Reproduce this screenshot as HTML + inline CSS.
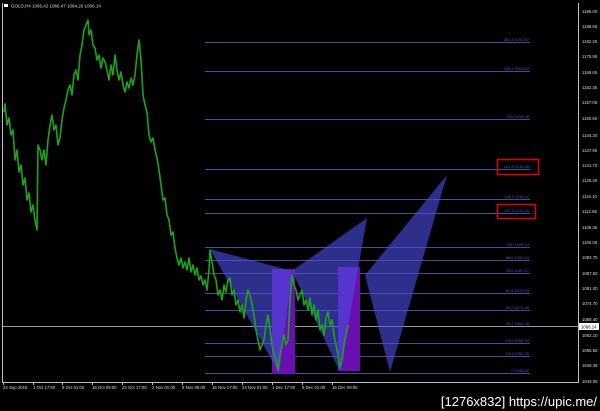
<!DOCTYPE html>
<html><head><meta charset="utf-8"><style>
html,body{margin:0;padding:0;background:#000;width:600px;height:411px;overflow:hidden}
svg{display:block}
text{font-family:"Liberation Sans",sans-serif}
</style></head><body>
<svg width="600" height="411" viewBox="0 0 600 411" xmlns="http://www.w3.org/2000/svg">
<rect width="600" height="411" fill="#000"/>
<line x1="2.5" y1="3" x2="2.5" y2="383" stroke="#c0c0c0" stroke-width="1"/>
<line x1="2" y1="382.5" x2="579" y2="382.5" stroke="#c0c0c0" stroke-width="1"/>
<line x1="578.5" y1="3" x2="578.5" y2="383" stroke="#c0c0c0" stroke-width="1"/>
<rect x="4" y="4" width="4" height="3" fill="#fff"/>
<text x="11" y="7.5" font-size="4.5" fill="#ddd">GOLD,H4  1065.42  1066.47  1064.20  1066.14</text>
<g stroke="#4c4c96" stroke-width="1">
<line x1="205" y1="42.5" x2="530" y2="42.5"/>
<line x1="205" y1="71.5" x2="530" y2="71.5"/>
<line x1="205" y1="119.5" x2="530" y2="119.5"/>
<line x1="205" y1="169.5" x2="530" y2="169.5"/>
<line x1="205" y1="199.5" x2="530" y2="199.5"/>
<line x1="205" y1="213.5" x2="530" y2="213.5"/>
<line x1="205" y1="247.5" x2="530" y2="247.5"/>
<line x1="205" y1="260.5" x2="530" y2="260.5"/>
<line x1="205" y1="273.5" x2="530" y2="273.5"/>
<line x1="205" y1="293.5" x2="530" y2="293.5"/>
<line x1="205" y1="310.5" x2="530" y2="310.5"/>
<line x1="205" y1="343.5" x2="530" y2="343.5"/>
<line x1="205" y1="356.5" x2="530" y2="356.5"/>
<line x1="205" y1="373.5" x2="530" y2="373.5"/>
</g>
<line x1="3" y1="326.5" x2="578" y2="326.5" stroke="#9a9a9a" stroke-width="1"/>
<g font-size="4" fill="#4a5ad0" text-anchor="end">
<text x="529" y="41">261.8  1192.87</text>
<text x="529" y="70">238.2  1164.63</text>
<text x="529" y="118">200  1155.06</text>
<text x="529" y="168">161.8  1135.38</text>
<text x="529" y="198">138.2  1118.10</text>
<text x="529" y="212">127.2  1112.40</text>
<text x="529" y="246">100  1098.14</text>
<text x="529" y="259">88.6  1092.44</text>
<text x="529" y="272">78.6  1087.27</text>
<text x="529" y="292">61.8  1079.03</text>
<text x="529" y="309">50.0  1071.48</text>
<text x="529" y="325">38.2  1064.38</text>
<text x="529" y="342">23.6  1058.63</text>
<text x="529" y="355">13.4  1052.76</text>
<text x="529" y="372">0  1046.62</text>
</g>
<rect x="497.5" y="159.5" width="41" height="15" fill="none" stroke="#e00000" stroke-width="1.5"/>
<rect x="497.5" y="204.5" width="38" height="14" fill="none" stroke="#e00000" stroke-width="1.5"/>
<rect x="272" y="269" width="23" height="105" fill="#6a10b0"/>
<rect x="338" y="267" width="22" height="104" fill="#6a10b0"/>
<g fill="rgba(75,75,225,0.62)">
<polygon points="210,249 292,271 279,373"/>
<polygon points="292,271 367,218 340,372"/>
<polygon points="365,275 447,175 390,372"/>
</g>
<polyline fill="none" stroke="#1aa51a" stroke-width="1.6" stroke-linejoin="round" points="
4,112 5,104 7,125 9,118 11,135 13,130 15,160 17,150 19,172 21,165 23,185 25,178 27,200 29,193 31,212 33,205 35,220 37,230 38,145 40,150 42,160 44,150 46,165 48,140 50,125 52,115 54,130 56,125 58,145 60,138 62,120 64,108 66,100 68,90 70,85 72,95 74,75 76,70 78,80 80,55 82,45 84,30 86,25 88,20 89,35 91,30 93,45 95,48 97,60 99,55 101,68 103,58 105,62 107,70 109,80 111,65 113,75 115,55 117,70 119,80 121,72 123,85 125,92 127,82 129,88 131,78 133,85 135,75 137,55 139,40 141,60 143,95 145,105 147,112 149,135 151,142 153,138 155,150 157,158 159,170 161,185 163,200 165,198 167,215 169,220 171,235 173,232 175,248 177,258 179,265 181,258 183,268 185,262 187,270 189,258 191,272 193,265 195,275 197,268 199,280 201,276 203,285 205,280 207,290 209,270 210,250 212,262 214,275 216,280 218,295 220,290 222,300 224,285 226,292 228,280 230,278 232,295 234,290 236,305 238,300 240,312 242,305 244,318 246,300 248,290 250,295 252,305 254,315 256,330 258,340 260,350 262,345 264,340 266,325 268,315 270,330 272,345 274,355 276,360 278,370 280,355 282,345 284,335 286,345 288,340 290,300 292,275 294,285 296,290 298,300 300,295 302,290 304,305 306,300 308,310 310,298 312,315 314,305 316,320 318,310 320,330 322,325 324,335 326,318 328,312 330,325 332,320 334,335 336,345 338,355 340,368 342,360 344,345 346,335 348,325"/>
<g font-size="4.3" fill="#ddd">
<text x="582" y="13">1195.00</text>
<text x="582" y="28">1188.55</text>
<text x="582" y="43">1182.25</text>
<text x="582" y="58">1175.95</text>
<text x="582" y="74">1169.65</text>
<text x="582" y="89">1162.35</text>
<text x="582" y="104">1157.05</text>
<text x="582" y="120">1150.60</text>
<text x="582" y="137">1144.30</text>
<text x="582" y="152">1137.95</text>
<text x="582" y="167">1131.70</text>
<text x="582" y="182">1125.40</text>
<text x="582" y="198">1119.10</text>
<text x="582" y="213">1112.65</text>
<text x="582" y="229">1106.35</text>
<text x="582" y="244">1100.05</text>
<text x="582" y="259">1093.75</text>
<text x="582" y="275">1087.50</text>
<text x="582" y="290">1081.00</text>
<text x="582" y="305">1074.70</text>
<text x="582" y="321">1068.40</text>
<text x="582" y="337">1062.10</text>
<text x="582" y="352">1055.65</text>
<text x="582" y="367">1049.35</text>
<text x="582" y="383">1043.05</text>
</g>
<rect x="579" y="323" width="20" height="7" fill="#fff"/>
<text x="581" y="328.5" font-size="4.3" fill="#000">1066.14</text>
<g font-size="4.3" fill="#ddd">
<text x="3" y="389">24 Sep 2015</text>
<text x="33" y="389">1 Oct 17:00</text>
<text x="62" y="389">9 Oct 01:00</text>
<text x="92" y="389">16 Oct 09:00</text>
<text x="122" y="389">23 Oct 17:00</text>
<text x="152" y="389">2 Nov 01:00</text>
<text x="182" y="389">9 Nov 09:00</text>
<text x="212" y="389">16 Nov 17:00</text>
<text x="242" y="389">24 Nov 01:00</text>
<text x="272" y="389">1 Dec 17:00</text>
<text x="302" y="389">9 Dec 01:00</text>
<text x="332" y="389">16 Dec 09:00</text>
</g>
<g stroke="#c0c0c0" stroke-width="1">
<line x1="3.5" y1="382" x2="3.5" y2="385"/><line x1="33.5" y1="382" x2="33.5" y2="385"/><line x1="62.5" y1="382" x2="62.5" y2="385"/><line x1="92.5" y1="382" x2="92.5" y2="385"/><line x1="122.5" y1="382" x2="122.5" y2="385"/><line x1="152.5" y1="382" x2="152.5" y2="385"/><line x1="182.5" y1="382" x2="182.5" y2="385"/><line x1="212.5" y1="382" x2="212.5" y2="385"/><line x1="242.5" y1="382" x2="242.5" y2="385"/><line x1="272.5" y1="382" x2="272.5" y2="385"/><line x1="302.5" y1="382" x2="302.5" y2="385"/><line x1="332.5" y1="382" x2="332.5" y2="385"/>
</g>
<text x="597" y="406" font-size="13" fill="#fff" text-anchor="end" font-family="'DejaVu Sans Condensed','DejaVu Sans',sans-serif">[1276x832] https://upic.me/</text>
</svg>
</body></html>
